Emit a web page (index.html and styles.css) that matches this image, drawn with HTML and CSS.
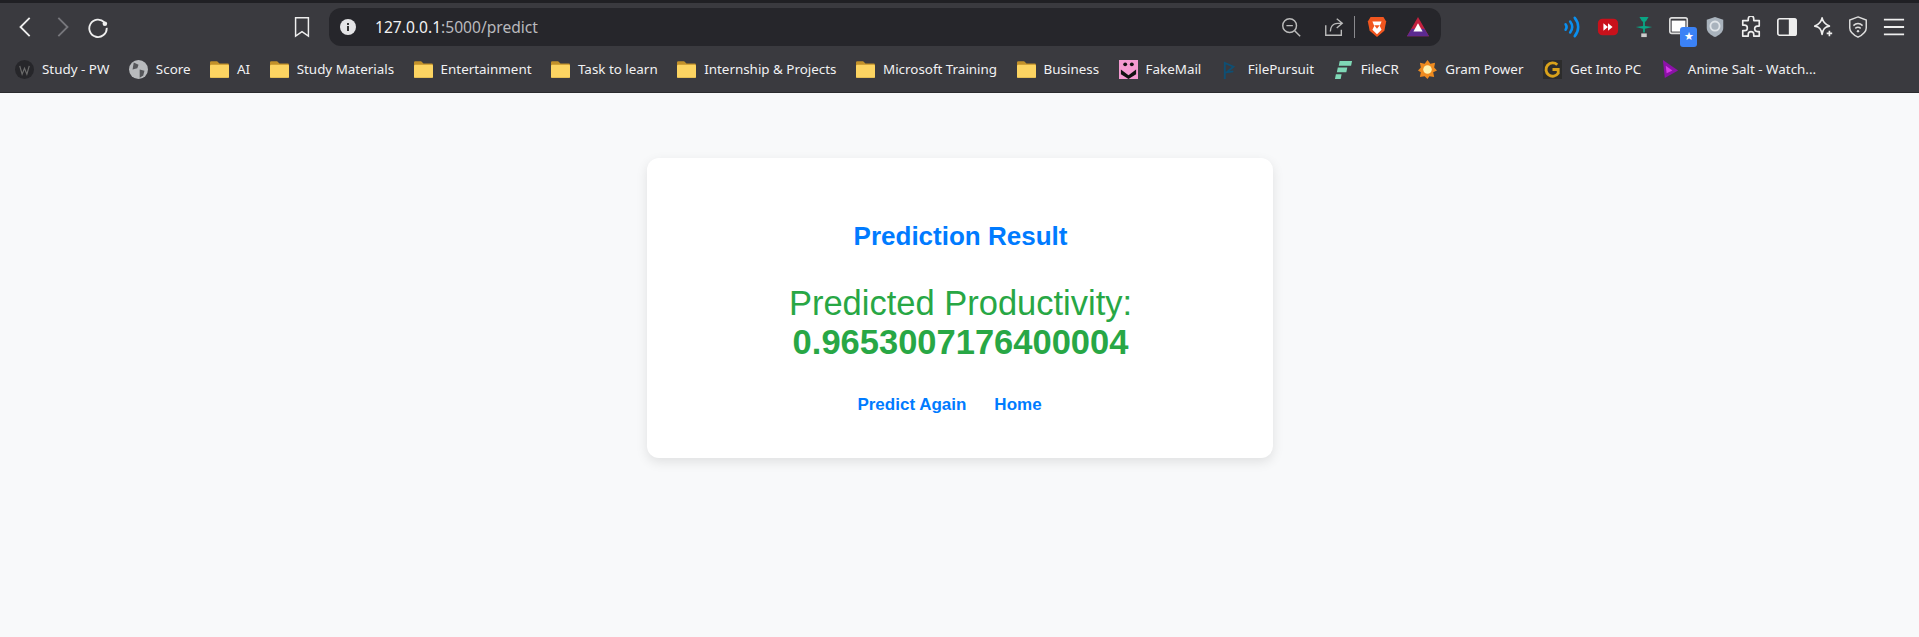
FILE: index.html
```html
<!DOCTYPE html>
<html lang="en">
<head>
<meta charset="utf-8">
<title>Prediction Result</title>
<link rel="stylesheet" href="styles.css">
</head>
<body>
<header class="chrome">
  <div class="toolbar">
    <div class="nav">
      <svg class="ic" viewBox="0 0 24 24"><path d="M16 2 6 12l10 10" fill="none" stroke="#eee" stroke-width="2"/></svg>
      <svg class="ic" viewBox="0 0 24 24"><path d="M8 2l10 10L8 22" fill="none" stroke="#77777c" stroke-width="2"/></svg>
      <svg class="ic" viewBox="0 0 24 24"><path d="M19 7a9.500 9.500 0 1 0 2.500 6" fill="none" stroke="#eee" stroke-width="2"/><circle cx="19.500" cy="8.500" r="2.500" fill="#eee"/></svg>
    </div>
    <svg class="ic bookmark" viewBox="0 0 24 24"><path d="M5 2h14v20l-7-5-7 5z" fill="none" stroke="#eee" stroke-width="1.600"/></svg>
    <div class="address">
      <svg class="info" viewBox="0 0 16 16"><circle cx="8" cy="8" r="8" fill="#e4e4e6"/><rect x="7" y="7" width="2" height="5" fill="#333"/><rect x="7" y="4" width="2" height="2" fill="#333"/></svg>
      <span class="url">127.0.0.1<span class="url-dim">:5000/predict</span></span>
      <span class="spring"></span>
      <svg class="ic" viewBox="0 0 24 24"><circle cx="10.500" cy="10.500" r="7.500" fill="none" stroke="#bbb" stroke-width="1.600"/><path d="M7 10.500h7M16 16l6 6" stroke="#bbb" stroke-width="1.600"/></svg>
      <svg class="ic share" viewBox="0 0 24 24"><path d="M15 3l6 5-6 5M21 8h-5c-6 0-8 5-8 9M3 10v11h17v-6" fill="none" stroke="#bbb" stroke-width="1.500"/></svg>
      <span class="sep"></span>
      <svg class="ic brave" viewBox="0 0 24 24"><path d="M5 1h14l3 5-2 10-8 7-8-7-2-10z" fill="#f1561f"/><path d="M7 6h10l-2 5 2 4-5 5-5-5 2-4z" fill="#fff"/><path d="M9 10h6l-3 4z" fill="#f1561f"/></svg>
      <svg class="ic bat" viewBox="0 0 24 24"><path d="M12 1 24 22H0z" fill="#c4203f"/><path d="M0 22l5-8h14l5 8z" fill="#5c2a91"/><path d="M12 8l5 9H7z" fill="#fff"/></svg>
    </div>
    <div class="extensions">
      <svg class="ic" viewBox="0 0 24 24"><path d="M5 9c1.500 2 1.500 4 0 6M10 6c3 4 3 8 0 12M15 2c5 6 5 14 0 20" fill="none" stroke="#0a8fef" stroke-width="2.800" stroke-linecap="round"/></svg>
      <svg class="ic" viewBox="0 0 24 24"><rect x="1" y="3" width="22" height="18" rx="5" fill="#c9111b"/><path d="M7 8l5 4-5 4zM12 8l5 4-5 4z" fill="#fff"/></svg>
      <svg class="ic" viewBox="0 0 24 24"><path d="M7 1h10l-3 5h-1v5l8 1-8 2v4h-2v-4l-8-2 8-1V6h-1z" fill="#0aa584"/><rect x="9" y="19" width="6" height="4" fill="#ccc"/></svg>
      <span class="tab-ext">
        <svg class="ic" viewBox="0 0 24 24"><rect x="2" y="2" width="19" height="17" rx="2" fill="none" stroke="#ddd" stroke-width="1.800"/><rect x="4" y="5" width="15" height="12" fill="#fff"/></svg>
        <span class="badge">★</span>
      </span>
      <svg class="ic" viewBox="0 0 24 24"><path d="M12 1l9 3v9c0 5-5 8-9 10-4-2-9-5-9-10V4z" fill="#a9b3bd"/><circle cx="12" cy="11" r="5" fill="none" stroke="#dfe4e8" stroke-width="2"/></svg>
      <svg class="ic" viewBox="0 0 24 24"><path d="M9 3a3 3 0 0 1 6 0v2h6v6h-2a3 3 0 0 0 0 6h2v5h-6v-2a3 3 0 0 0-6 0v2H3v-6h2a3 3 0 0 0 0-6H3V5h6z" fill="none" stroke="#eee" stroke-width="1.800" stroke-linejoin="round"/></svg>
      <svg class="ic" viewBox="0 0 24 24"><rect x="2" y="3" width="20" height="18" rx="2" fill="none" stroke="#eee" stroke-width="1.800"/><rect x="14" y="3" width="8" height="18" fill="#eee"/></svg>
      <svg class="ic" viewBox="0 0 24 24"><path d="M11 2c1 5 3 7 8 9-5 1-7 3-8 9-1-6-3-8-8-9 5-2 7-4 8-9z" fill="none" stroke="#eee" stroke-width="1.800" stroke-linejoin="round"/><path d="M19 16v6M16 19h6" stroke="#eee" stroke-width="1.800"/></svg>
      <svg class="ic" viewBox="0 0 24 24"><path d="M12 1l9 3.500v8.500c0 5-5 8-9 10-4-2-9-5-9-10V4.500z" fill="none" stroke="#ddd" stroke-width="1.600"/><path d="M7 10.500c3-3 7-3 10 0M9 13.500c2-1.500 4-1.500 6 0" fill="none" stroke="#ddd" stroke-width="1.600"/><circle cx="12" cy="16.500" r="1.300" fill="#ddd"/></svg>
      <svg class="ic" viewBox="0 0 24 24"><path d="M1 4h22M1 12h22M1 20h22" stroke="#eee" stroke-width="2"/></svg>
    </div>
  </div>
  <nav class="bookmarks">
    <a class="bm"><svg class="fav" viewBox="0 0 16 16"><circle cx="8" cy="8" r="8" fill="#26262a"/><path d="M4 5l2 7 2-5 2 5 2-7" fill="none" stroke="#6b6b6b"/></svg>Study - PW</a>
    <a class="bm"><svg class="fav" viewBox="0 0 16 16"><circle cx="8" cy="8" r="8" fill="#b8babd"/><path d="M4 2l4 2-1 3-4 1zM9 8l4 1-1 4-3 2z" fill="#55565a"/></svg>Score</a>
    <a class="bm"><svg class="fav" viewBox="0 0 16 16"><use href="#folder"/></svg>AI</a>
    <a class="bm"><svg class="fav" viewBox="0 0 16 16"><use href="#folder"/></svg>Study Materials</a>
    <a class="bm"><svg class="fav" viewBox="0 0 16 16"><use href="#folder"/></svg>Entertainment</a>
    <a class="bm"><svg class="fav" viewBox="0 0 16 16"><use href="#folder"/></svg>Task to learn</a>
    <a class="bm"><svg class="fav" viewBox="0 0 16 16"><use href="#folder"/></svg>Internship &amp; Projects</a>
    <a class="bm"><svg class="fav" viewBox="0 0 16 16"><use href="#folder"/></svg>Microsoft Training</a>
    <a class="bm"><svg class="fav" viewBox="0 0 16 16"><use href="#folder"/></svg>Business</a>
    <a class="bm"><svg class="fav" viewBox="0 0 20 20"><rect width="20" height="20" fill="#f49ad1"/><circle cx="6.500" cy="4.500" r="2" fill="#111"/><circle cx="13.500" cy="4.500" r="2" fill="#111"/><path d="M2 10l8 6 8-6v5l-8 5-8-5z" fill="#111"/></svg>FakeMail</a>
    <a class="bm"><svg class="fav" viewBox="0 0 20 20"><path d="M4 20V3l9 4-7 6 7-1" fill="none" stroke="#0f4f73" stroke-width="2"/></svg>FilePursuit</a>
    <a class="bm"><svg class="fav" viewBox="0 0 20 20"><path d="M6 1h13l-1 5H5zM4 8h10l-1 5H3zM2 15h6l-1 5H1z" fill="#7fd8b6"/></svg>FileCR</a>
    <a class="bm"><svg class="fav" viewBox="0 0 20 20"><path d="M10 0l3 4 5-1-1 5 3 3-4 2 1 5-5-1-2 3-3-3-5 1 1-5-3-2 3-3-1-5 5 1z" fill="#ef8b1f"/><circle cx="10" cy="10" r="4.500" fill="#fff3b0"/></svg>Gram Power</a>
    <a class="bm"><svg class="fav" viewBox="0 0 20 20"><rect width="20" height="20" fill="#2c2c2c"/><path d="M15 5a7 7 0 1 0 1 9v-4h-6" fill="none" stroke="#d9a21b" stroke-width="3"/></svg>Get Into PC</a>
    <a class="bm"><svg class="fav" viewBox="0 0 20 20"><path d="M2 0l16 11L4 19z" fill="#8c12a8"/><path d="M5 6l7 5-6 3z" fill="#d63be8"/></svg>Anime Salt - Watch...</a>
  </nav>
  <svg class="defs" aria-hidden="true"><defs><g id="folder"><path d="M0 2a1 1 0 0 1 1-1h5l2 2h7a1 1 0 0 1 1 1v10a1 1 0 0 1-1 1H1a1 1 0 0 1-1-1z" fill="#c2912a"/><rect y="4" width="16" height="11" rx="1" fill="#fcd462"/></g></defs></svg>
</header>
<main class="page">
  <section class="card">
    <h1 class="title">Prediction Result</h1>
    <p class="result">Predicted Productivity: <strong>0.9653007176400004</strong></p>
    <div class="links"><a class="link">Predict Again</a><a class="link">Home</a></div>
  </section>
</main>
</body>
</html>
```
FILE: styles.css
```css
* { box-sizing: border-box; }
html, body { margin: 0; height: 100%; }
body { background: #f8f9fa; overflow: hidden; font-family: "Liberation Sans", Arial, sans-serif; display: flex; flex-direction: column; }
.chrome { background: #3a3a3f; border-top: 3px solid #202024; flex: none; height: 93px; border-bottom: 1px solid #2b2b2e; }
.toolbar { height: 48px; display: flex; align-items: center; }
.ic { width: 22px; height: 22px; flex: none; display: block; }
.nav { display: flex; flex: none; gap: 14px; padding-left: 15px; width: 291px; }
.bookmark { margin-right: 16px; }
.address { width: 1112px; flex: none; height: 38px; background: #26262b; border-radius: 12px; display: flex; align-items: center; padding: 0 12px 0 11px; }
.info { width: 16px; height: 16px; flex: none; }
.url { font: 15.6px "Noto Sans", sans-serif; color: #f1f1f2; margin-left: 19px; }
.url-dim { color: #b9b9bd; }
.spring { flex: 1; }
.share { margin-left: 21px; }
.sep { width: 1px; height: 22px; background: #8a8a8e; margin: 0 11px 0 9px; }
.bat { margin-left: 19px; }
.extensions { display: flex; flex: none; align-items: center; gap: 13.8px; margin-left: 120px; }
.tab-ext { position: relative; display: block; width: 22px; height: 22px; }
.badge { position: absolute; right: -7px; bottom: -9px; width: 17px; height: 20px; background: #3b82f6; border-radius: 3px; color: #fff; font: 11px/20px "DejaVu Sans", sans-serif; text-align: center; }
.bookmarks { height: 36px; display: flex; align-items: center; padding-left: 15px; }
.bm { display: flex; align-items: center; font: 13.4px "Noto Sans", sans-serif; color: #f1f1f3; white-space: nowrap; margin-right: 19.5px; }
.fav { width: 19px; height: 19px; flex: none; margin-right: 8px; }
.defs { position: absolute; width: 0; height: 0; }
.page { flex: 1; display: flex; justify-content: center; align-items: flex-start; padding-top: 65px; }
.card { width: 626px; height: 300px; background: #fff; border-radius: 12px; box-shadow: 0 4px 12px rgba(0,0,0,.1); padding: 62px 40px 0 42px; text-align: center; }
.title { margin: 0; color: #007bff; font-size: 26px; font-weight: 700; line-height: 32px; }
.result { margin: 32px 0 0; color: #28a745; font-size: 34.5px; line-height: 39px; }
.links { margin-top: 33px; display: flex; justify-content: center; gap: 28px; padding-right: 22px; }
.link { color: #007bff; font-size: 17px; font-weight: 700; }
```
